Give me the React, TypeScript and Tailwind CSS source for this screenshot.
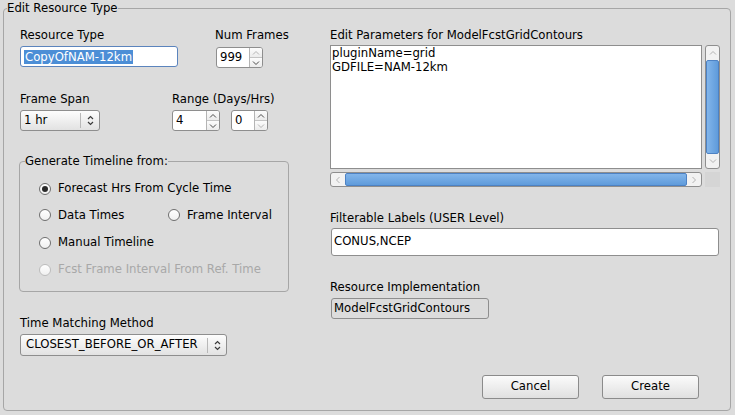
import React from "react";

function Chevron({ dir, disabled }: { dir: "up" | "down" | "left" | "right"; disabled?: boolean }) {
  const pts =
    dir === "up"
      ? "1,4.5 4,1.5 7,4.5"
      : dir === "down"
        ? "1,1.5 4,4.5 7,1.5"
        : dir === "left"
          ? "4.5,1 1.5,4 4.5,7"
          : "1.5,1 4.5,4 1.5,7";
  const box = dir === "up" || dir === "down" ? "0 0 8 6" : "0 0 6 8";
  return (
    <svg
      viewBox={box}
      className={dir === "up" || dir === "down" ? "h-[6px] w-[8px]" : "h-[8px] w-[6px]"}
    >
      <polyline
        points={pts}
        fill="none"
        stroke={disabled ? "#b4b4b4" : "#4a4a4a"}
        strokeWidth="1"
      />
    </svg>
  );
}

function UpDown() {
  return (
    <svg viewBox="0 0 7 11" className="h-[11px] w-[7px]">
      <polyline points="1,4 3.5,1.5 6,4" fill="none" stroke="#3c3c3c" strokeWidth="1.2" />
      <polyline points="1,7 3.5,9.5 6,7" fill="none" stroke="#3c3c3c" strokeWidth="1.2" />
    </svg>
  );
}

function SpinBox({
  value,
  className,
  upDisabled,
  downDisabled,
}: {
  value: string;
  className: string;
  upDisabled?: boolean;
  downDisabled?: boolean;
}) {
  return (
    <div className={`flex h-[21px] rounded-[3px] border border-[#8e8e8e] bg-white ${className}`}>
      <div className="flex-1 pl-[3px] leading-[19px]">{value}</div>
      <div className="flex w-[13px] flex-col border-l border-[#b4b4b4]">
        <div className="flex flex-1 items-center justify-center rounded-tr-[2px] bg-gradient-to-b from-[#fcfcfc] to-[#ececec]">
          <Chevron dir="up" disabled={upDisabled} />
        </div>
        <div className="flex flex-1 items-center justify-center rounded-br-[2px] border-t border-[#c4c4c4] bg-gradient-to-b from-[#fcfcfc] to-[#ececec]">
          <Chevron dir="down" disabled={downDisabled} />
        </div>
      </div>
    </div>
  );
}

function Combo({ value, className, pad }: { value: string; className: string; pad: string }) {
  return (
    <div
      className={`flex items-center rounded-[3px] border border-[#8e8e8e] bg-gradient-to-b from-[#fdfdfd] to-[#e2e2e2] ${className}`}
    >
      <span className={`flex-1 ${pad}`}>{value}</span>
      <span className="h-[15px] w-px bg-[#b8b8b8]" />
      <span className="flex w-[18px] justify-center">
        <UpDown />
      </span>
    </div>
  );
}

function Radio({
  label,
  checked,
  disabled,
  className = "",
}: {
  label: string;
  checked?: boolean;
  disabled?: boolean;
  className?: string;
}) {
  return (
    <div className={`flex items-center gap-[7px] ${className}`}>
      <span
        className={`flex h-[12px] w-[12px] items-center justify-center rounded-full border bg-gradient-to-b from-white to-[#f0f0f0] ${
          disabled ? "border-[#bdbdbd]" : "border-[#6f6f6f]"
        }`}
      >
        {checked && <span className="h-[6px] w-[6px] rounded-full bg-[#2a2a2a]" />}
      </span>
      <span className={disabled ? "text-[#a8a8a8]" : ""}>{label}</span>
    </div>
  );
}

function Button({ label }: { label: string }) {
  return (
    <div className="flex h-[24px] w-[97px] items-center justify-center rounded-[3px] border border-[#8b8b8b] bg-gradient-to-b from-[#fbfbfb] to-[#e0e0e0]">
      {label}
    </div>
  );
}

export default function App() {
  return (
    <div className="h-[415px] w-[735px] overflow-hidden bg-[#dcdcdc] font-['DejaVu_Sans',sans-serif] text-[11.7px] text-black">
      <fieldset className="ml-[3px] h-[411px] w-[728px] rounded-[4px] border border-[#a6a6a6]">
        <legend className="ml-[3px] leading-4">Edit Resource Type</legend>
        <div className="flex">
          {/* left column */}
          <div className="w-[326px] pl-[16px]">
            <div className="mt-[11px] flex">
              <div className="w-[195px]">
                <div className="leading-4">Resource Type</div>
                <div className="mt-[3px] flex h-[21px] w-[158px] items-center rounded-[3px] border border-[#5b84bd] bg-white pl-[3px]">
                  <span className="bg-[#4c8ed6] px-px leading-[14px] text-white">CopyOfNAM-12km</span>
                </div>
              </div>
              <div>
                <div className="leading-4">Num Frames</div>
                <SpinBox value="999" className="mt-[4px] ml-[1px] w-[47px]" upDisabled />
              </div>
            </div>

            <div className="mt-[23px] flex">
              <div className="w-[152px]">
                <div className="leading-4">Frame Span</div>
                <Combo value="1 hr" className="mt-[3px] h-[21px] w-[80px]" pad="pl-[3px]" />
              </div>
              <div>
                <div className="leading-4">Range (Days/Hrs)</div>
                <div className="mt-[3px] flex gap-[11px]">
                  <SpinBox value="4" className="w-[48px]" />
                  <SpinBox value="0" className="w-[37px]" downDisabled />
                </div>
              </div>
            </div>

            <fieldset className="mt-[23px] ml-[-1px] h-[138px] w-[270px] rounded-[4px] border border-[#a6a6a6]">
              <legend className="ml-[5px] leading-[14px]">Generate Timeline from:</legend>
              <div className="pt-[7px] pl-[19px]">
                <Radio label="Forecast Hrs From Cycle Time" checked className="h-[27px]" />
                <div className="flex h-[27px] items-center">
                  <Radio label="Data Times" className="w-[129px]" />
                  <Radio label="Frame Interval" />
                </div>
                <Radio label="Manual Timeline" className="h-[27px]" />
                <Radio label="Fcst Frame Interval From Ref. Time" disabled className="h-[27px]" />
              </div>
            </fieldset>

            <div className="mt-[23px] leading-4">Time Matching Method</div>
            <Combo value="CLOSEST_BEFORE_OR_AFTER" className="mt-[3px] h-[22px] w-[207px]" pad="pl-[5px]" />
          </div>

          {/* right column */}
          <div className="w-[390px]">
            <div className="mt-[11px] leading-4">Edit Parameters for ModelFcstGridContours</div>
            <div className="mt-[2px] flex gap-[3px]">
              <div className="h-[124px] w-[372px] border border-[#8e8e8e] bg-white pl-[1px] leading-[14px]">
                <div>pluginName=grid</div>
                <div>GDFILE=NAM-12km</div>
              </div>
              <div className="flex h-[124px] w-[15px] flex-col rounded-[3px] border border-[#8e8e8e] bg-[#f2f2f2]">
                <div className="flex h-[14px] items-center justify-center">
                  <Chevron dir="up" disabled />
                </div>
                <div className="flex-1 rounded-[2px] border border-[#4d82c4] bg-gradient-to-r from-[#82b5ea] to-[#5f9bdb]" />
                <div className="flex h-[14px] items-center justify-center">
                  <Chevron dir="down" disabled />
                </div>
              </div>
            </div>
            <div className="mt-[3px] flex gap-[3px]">
              <div className="flex h-[15px] w-[372px] rounded-[3px] border border-[#8e8e8e] bg-[#f2f2f2]">
                <div className="flex w-[14px] items-center justify-center">
                  <Chevron dir="left" disabled />
                </div>
                <div className="flex-1 rounded-[2px] border border-[#4d82c4] bg-gradient-to-b from-[#82b5ea] to-[#5f9bdb]" />
                <div className="flex w-[14px] items-center justify-center">
                  <Chevron dir="right" disabled />
                </div>
              </div>
              <div className="h-[15px] w-[15px] bg-[#d5d5d5]" />
            </div>

            <div className="mt-[23px] leading-4">Filterable Labels (USER Level)</div>
            <div className="mt-[2px] ml-[1px] flex h-[28px] w-[388px] items-center rounded-[3px] border border-[#8e8e8e] bg-white pl-[2px]">
              CONUS,NCEP
            </div>

            <div className="mt-[23px] leading-4">Resource Implementation</div>
            <div className="mt-[3px] ml-[1px] flex h-[21px] w-[158px] items-center rounded-[3px] border border-[#8e8e8e] pl-[2px]">
              ModelFcstGridContours
            </div>

            <div className="mt-[56px] flex justify-end gap-[23px] pr-[21px]">
              <Button label="Cancel" />
              <Button label="Create" />
            </div>
          </div>
        </div>
      </fieldset>
    </div>
  );
}
